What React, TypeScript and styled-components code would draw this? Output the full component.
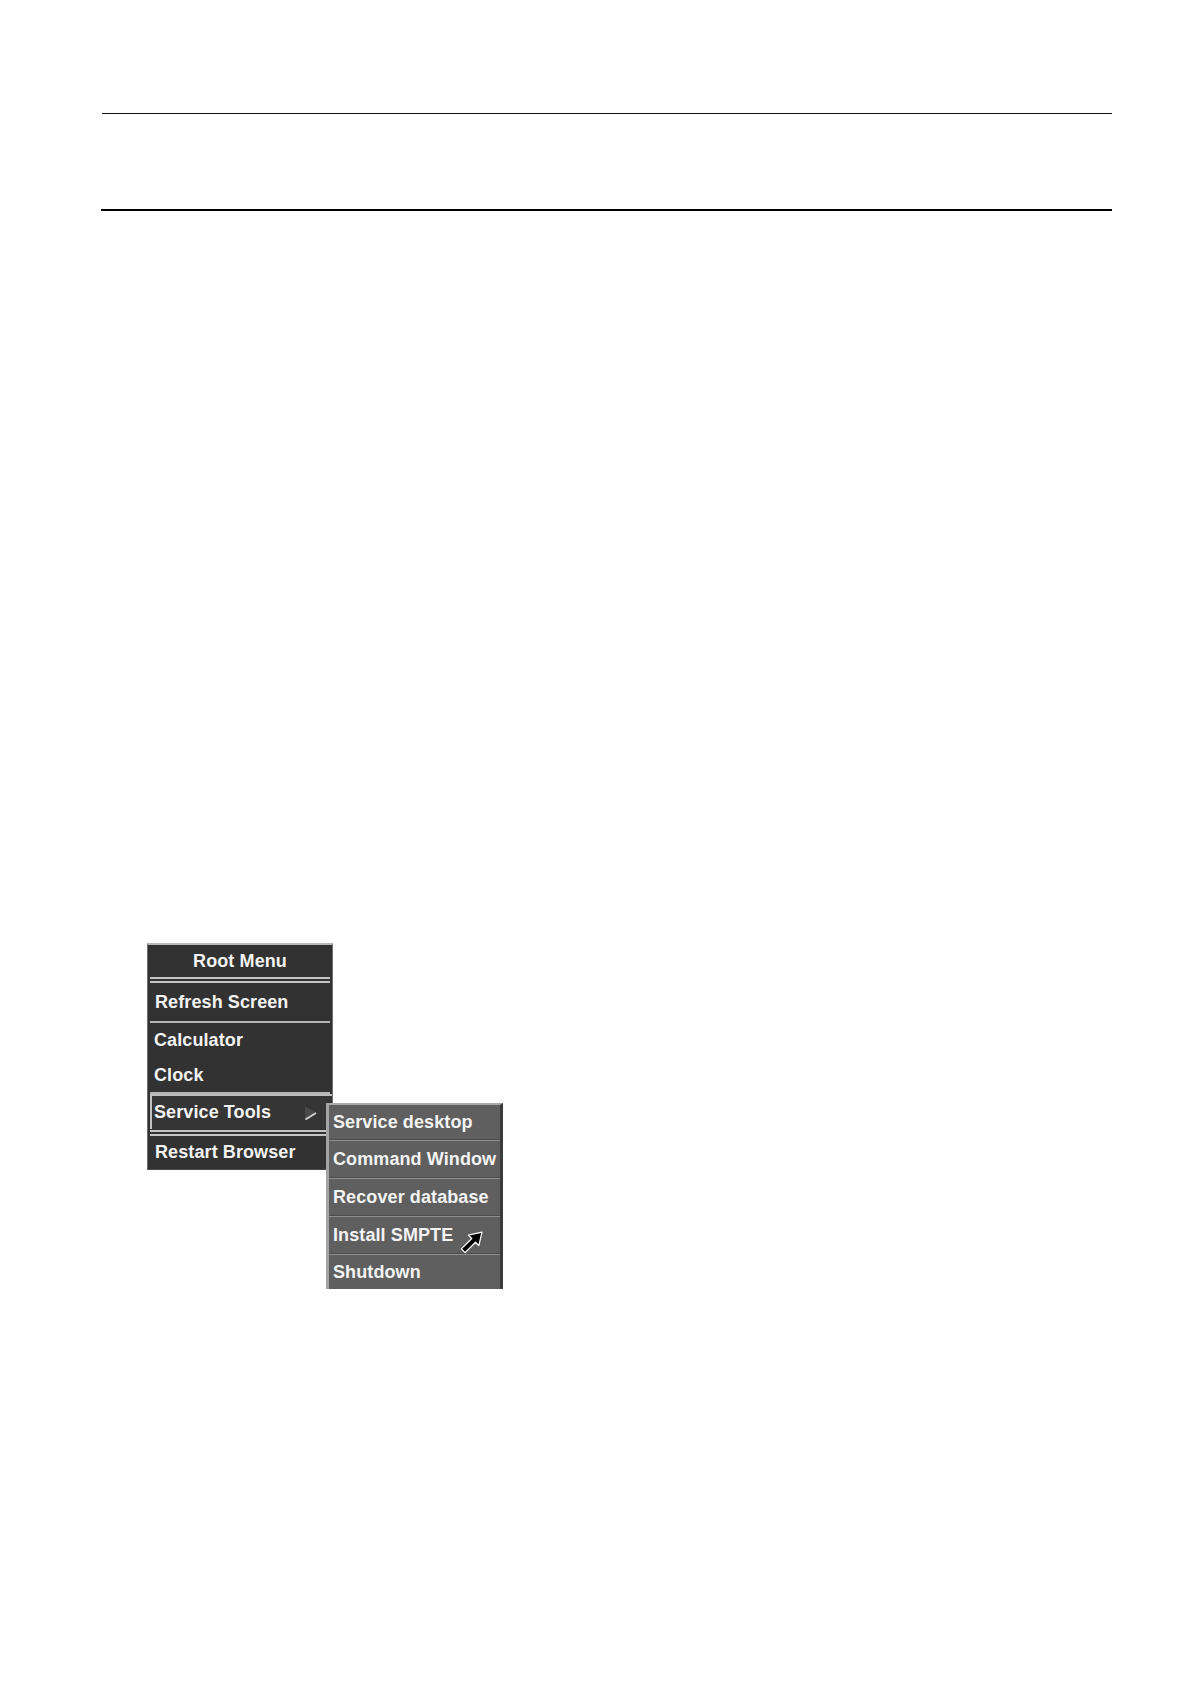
import React from "react";
import styled, { createGlobalStyle } from "styled-components";

const Global = createGlobalStyle`
  html, body { margin: 0; padding: 0; background: #ffffff; }
  body { font-family: "Liberation Sans", Arial, sans-serif; }
`;

const Page = styled.div`
  width: 1190px;
  min-height: 1684px;
  box-sizing: border-box;
  padding: 113px 0 0 101px;
`;

const HeaderBand = styled.div`
  width: 1011px;
  display: flex;
  flex-direction: column;
`;

const ThinRule = styled.div`
  height: 1px;
  margin-left: 1px;
  background: #111;
`;

const HeaderSpace = styled.div`
  height: 95px;
`;

const ThickRule = styled.div`
  height: 2px;
  background: #000;
`;

const MenuArea = styled.div`
  position: relative;
  margin: 732px 0 0 46px;
  width: 360px;
  height: 350px;
`;

const RootMenu = styled.div`
  width: 186px;
  box-sizing: border-box;
  background: #323232;
  border-top: 2px solid #b8b8b8;
  border-left: 1px solid #6e6e6e;
  border-right: 1px solid #6e6e6e;
  border-bottom: 1px solid #4a4a4a;
  display: flex;
  flex-direction: column;
`;

const Label = styled.span`
  font-family: "Liberation Sans", Arial, sans-serif;
  font-weight: 700;
  font-size: 18px;
  letter-spacing: 0.1px;
  color: #f3f3f3;
  white-space: nowrap;
`;

const TitleRow = styled.div`
  height: 32px;
  display: flex;
  align-items: center;
  justify-content: center;
`;

const Row = styled.div<{ $h: number; $pl?: number }>`
  height: ${(p) => p.$h}px;
  display: flex;
  align-items: center;
  padding-left: ${(p) => p.$pl ?? 7}px;
`;

const SingleSep = styled.div`
  height: 2px;
  margin: 0 2px;
  background: #b4b4b4;
`;

const DoubleSep = styled.div<{ $mt?: number }>`
  height: 6px;
  margin: ${(p) => p.$mt ?? 0}px 2px 0 2px;
  box-sizing: border-box;
  border-top: 2px solid #c6c6c6;
  border-bottom: 2px solid #c6c6c6;
`;

const ActiveRow = styled.div`
  height: 33px;
  margin: 0 0 0 2px;
  display: flex;
  align-items: center;
  justify-content: space-between;
  padding: 0 15px 0 2px;
  border-top: 2px solid #bdbdbd;
  border-left: 2px solid #c2c2c2;
  background: #353535;
`;

const SubMenu = styled.div`
  position: absolute;
  left: 179px;
  top: 160px;
  width: 177px;
  box-sizing: border-box;
  background: #5f5f5f;
  border-top: 2px solid #a9a9a9;
  border-left: 3px solid #a4a4a4;
  border-right: 3px solid #3b3b3b;
  display: flex;
  flex-direction: column;
`;

const SubRow = styled.div<{ $h: number }>`
  position: relative;
  height: ${(p) => p.$h}px;
  display: flex;
  align-items: center;
  padding-left: 4px;
`;

const SubSep = styled.div`
  height: 2px;
  box-sizing: border-box;
  border-top: 1px solid #4c4c4c;
  background: #8f8f8f;
`;

const Pointer = styled.svg`
  position: absolute;
  left: 129px;
  top: 14px;
  width: 25px;
  height: 25px;
  z-index: 2;
`;

const SubArrow = () => (
  <svg width="13" height="16" viewBox="0 0 13 16">
    <polygon points="1,1 12,8 1,15" fill="#4a4a4a" />
    <line x1="1.5" y1="14.5" x2="12" y2="8" stroke="#d0d0d0" strokeWidth="2" />
  </svg>
);

const subItems: { label: string; h: number; cursor?: boolean }[] = [
  { label: "Service desktop", h: 34 },
  { label: "Command Window", h: 36 },
  { label: "Recover database", h: 36 },
  { label: "Install SMPTE", h: 36, cursor: true },
  { label: "Shutdown", h: 34 },
];

export default function App() {
  return (
    <>
      <Global />
      <Page>
        <HeaderBand>
          <ThinRule />
          <HeaderSpace />
          <ThickRule />
        </HeaderBand>
        <MenuArea>
          <RootMenu>
            <TitleRow>
              <Label>Root Menu</Label>
            </TitleRow>
            <DoubleSep />
            <Row $h={38}>
              <Label>Refresh Screen</Label>
            </Row>
            <SingleSep />
            <Row $h={35} $pl={6}>
              <Label>Calculator</Label>
            </Row>
            <Row $h={34} $pl={6}>
              <Label>Clock</Label>
            </Row>
            <SingleSep />
            <ActiveRow>
              <Label>Service Tools</Label>
              <SubArrow />
            </ActiveRow>
            <DoubleSep $mt={1} />
            <Row $h={33}>
              <Label>Restart Browser</Label>
            </Row>
          </RootMenu>
          <SubMenu>
            {subItems.map((it, i) => (
              <React.Fragment key={it.label}>
                {i > 0 && <SubSep />}
                <SubRow $h={it.h}>
                  <Label>{it.label}</Label>
                  {it.cursor && (
                    <Pointer viewBox="0 0 24 24">
                      <polygon
                        points="23,1 20,14 16.8,10.8 6.8,20.8 3.2,17.2 13.2,7.2 10,4"
                        fill="#000"
                        stroke="#fff"
                        strokeWidth="1.2"
                        strokeLinejoin="round"
                      />
                    </Pointer>
                  )}
                </SubRow>
              </React.Fragment>
            ))}
          </SubMenu>
        </MenuArea>
      </Page>
    </>
  );
}
